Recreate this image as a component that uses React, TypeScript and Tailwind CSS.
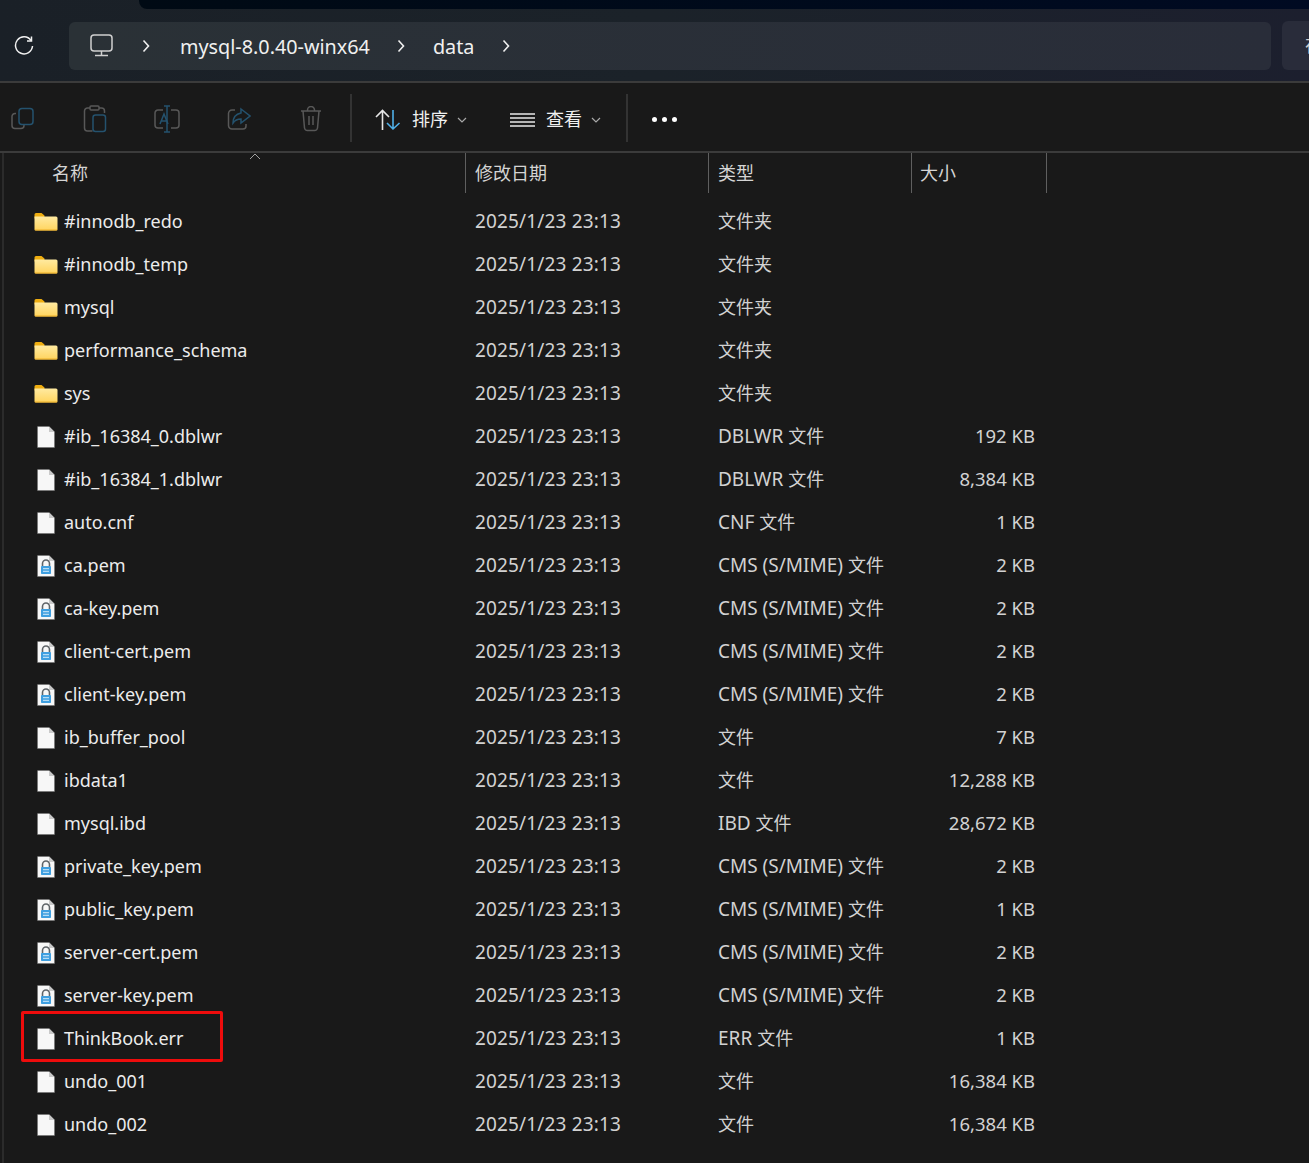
const FONT = 'font-["Noto_Sans","Noto_Sans_CJK_SC",sans-serif]';

type Kind = 'folder' | 'file' | 'pem';

const rows: { name: string; type: string; size: string; kind: Kind }[] = [
  { name: '#innodb_redo', type: '文件夹', size: '', kind: 'folder' },
  { name: '#innodb_temp', type: '文件夹', size: '', kind: 'folder' },
  { name: 'mysql', type: '文件夹', size: '', kind: 'folder' },
  { name: 'performance_schema', type: '文件夹', size: '', kind: 'folder' },
  { name: 'sys', type: '文件夹', size: '', kind: 'folder' },
  { name: '#ib_16384_0.dblwr', type: 'DBLWR 文件', size: '192 KB', kind: 'file' },
  { name: '#ib_16384_1.dblwr', type: 'DBLWR 文件', size: '8,384 KB', kind: 'file' },
  { name: 'auto.cnf', type: 'CNF 文件', size: '1 KB', kind: 'file' },
  { name: 'ca.pem', type: 'CMS (S/MIME) 文件', size: '2 KB', kind: 'pem' },
  { name: 'ca-key.pem', type: 'CMS (S/MIME) 文件', size: '2 KB', kind: 'pem' },
  { name: 'client-cert.pem', type: 'CMS (S/MIME) 文件', size: '2 KB', kind: 'pem' },
  { name: 'client-key.pem', type: 'CMS (S/MIME) 文件', size: '2 KB', kind: 'pem' },
  { name: 'ib_buffer_pool', type: '文件', size: '7 KB', kind: 'file' },
  { name: 'ibdata1', type: '文件', size: '12,288 KB', kind: 'file' },
  { name: 'mysql.ibd', type: 'IBD 文件', size: '28,672 KB', kind: 'file' },
  { name: 'private_key.pem', type: 'CMS (S/MIME) 文件', size: '2 KB', kind: 'pem' },
  { name: 'public_key.pem', type: 'CMS (S/MIME) 文件', size: '1 KB', kind: 'pem' },
  { name: 'server-cert.pem', type: 'CMS (S/MIME) 文件', size: '2 KB', kind: 'pem' },
  { name: 'server-key.pem', type: 'CMS (S/MIME) 文件', size: '2 KB', kind: 'pem' },
  { name: 'ThinkBook.err', type: 'ERR 文件', size: '1 KB', kind: 'file' },
  { name: 'undo_001', type: '文件', size: '16,384 KB', kind: 'file' },
  { name: 'undo_002', type: '文件', size: '16,384 KB', kind: 'file' },
];

function FolderIcon() {
  return (
    <svg width="24" height="20" viewBox="0 0 24 20">
      <defs>
        <linearGradient id="folderBody" x1="0" y1="0" x2="0" y2="1">
          <stop offset="0" stopColor="#ffeaa0" />
          <stop offset="1" stopColor="#ffd45e" />
        </linearGradient>
      </defs>
      <path d="M0.5 2.500a1.500 1.500 0 0 1 1.500-1.500h5.500l3 2.500v3h-10z" fill="#eead10" />
      <path d="M0.5 4.500h21.500a1.500 1.500 0 0 1 1.500 1.500v11a1.500 1.500 0 0 1-1.500 1.500h-20a1.500 1.500 0 0 1-1.500-1.500z" fill="url(#folderBody)" />
      <path d="M0.5 17.500h23v0.300a1 1 0 0 1-1 0.700h-21a1 1 0 0 1-1-0.700z" fill="#eeb028" />
    </svg>
  );
}

function FileIcon({ lock }: { lock?: boolean }) {
  return (
    <svg width="18" height="22" viewBox="0 0 18 22">
      <path d="M0.500 1a0.500 0.500 0 0 1 .5-.5h11l5.500 5.500v15a0.500 0.500 0 0 1-.5.5h-16a0.500 0.500 0 0 1-.5-.5z" fill="#f7f7f7" stroke="#777" strokeWidth="0.8" />
      <path d="M12 0.500v5.500h5.500z" fill="#c9c9c9" />
      {lock && (
        <g>
          <path d="M5.500 11.500v-3a3.500 3.500 0 0 1 7 0v3" fill="none" stroke="#5f6468" strokeWidth="1.600" />
          <rect x="4" y="11" width="10" height="8" rx="0.8" fill="#3f9fe0" />
          <rect x="6" y="13.200" width="6" height="1" fill="#d4ecfb" />
          <rect x="6" y="15.800" width="6" height="1" fill="#d4ecfb" />
        </g>
      )}
    </svg>
  );
}

function ToolbarIcons() {
  const gray = '#585858';
  const blue = '#24526e';
  return (
    <div className="flex items-center -mt-[2px]">
      <div className="w-[46px] mr-[13px] flex justify-center">
        <svg width="24" height="24" viewBox="0 0 24 24" fill="none" strokeWidth="1.5">
          <path d="M5 6.500h-1a3 3 0 0 0-3 3v9a3 3 0 0 0 3 3h6a3 3 0 0 0 3-3v-1" stroke={gray} />
          <rect x="8" y="1.500" width="14" height="16" rx="3" stroke={blue} />
        </svg>
      </div>
      <div className="w-[72px] flex justify-center">
        <svg width="24" height="28" viewBox="0 0 24 28" fill="none" strokeWidth="1.5">
          <path d="M7 3h-2.500a3 3 0 0 0-3 3v17a3 3 0 0 0 3 3h5M16 3h2.500a3 3 0 0 1 3 3v2" stroke={gray} />
          <rect x="7" y="1" width="9" height="4" rx="1" stroke={gray} />
          <rect x="10" y="10" width="12.500" height="16.500" rx="2.500" stroke={blue} />
        </svg>
      </div>
      <div className="w-[72px] flex justify-center">
        <svg width="26" height="28" viewBox="0 0 26 28" fill="none" strokeWidth="1.5">
          <path d="M9 5h-5a3 3 0 0 0-3 3v12a3 3 0 0 0 3 3h5M17 5h5a3 3 0 0 1 3 3v12a3 3 0 0 1-3 3h-5" stroke={gray} />
          <path d="M10 1h6M13 1v26M10 27h6" stroke={blue} />
          <path d="M6 19l4-10 4 10M7.500 16h5" stroke={blue} />
        </svg>
      </div>
      <div className="w-[72px] flex justify-center">
        <svg width="24" height="24" viewBox="0 0 24 24" fill="none" strokeWidth="1.5">
          <path d="M8 3h-3a3.500 3.500 0 0 0-3.500 3.500v12a3.500 3.500 0 0 0 3.500 3.500h11a3 3 0 0 0 3-3v-2" stroke={gray} />
          <path d="M14 2l9 7-9 7v-4c-4 0-6 1-8 4 0-6 3-9 8-10z" stroke={blue} />
        </svg>
      </div>
      <div className="w-[72px] flex justify-center">
        <svg width="22" height="26" viewBox="0 0 22 26" fill="none" strokeWidth="1.5" stroke={gray}>
          <path d="M1 5h20M7.500 5v-1a3 3 0 0 1 7 0v1M3 5l1.500 17a3 3 0 0 0 3 2.500h7a3 3 0 0 0 3-2.500l1.500-17M9 10v9M13 10v9" />
        </svg>
      </div>
    </div>
  );
}

function Chevron({ className }: { className: string }) {
  return (
    <svg className={className} width="8" height="14" viewBox="0 0 8 14" fill="none" stroke="#f0f0f0" strokeWidth="1.6">
      <path d="M1.500 1.500l5 5.500-5 5.500" />
    </svg>
  );
}

function SmallDown() {
  return (
    <svg width="10" height="6" viewBox="0 0 10 6" fill="none" stroke="#a8a8a8" strokeWidth="1.2">
      <path d="M1 1l4 4 4-4" />
    </svg>
  );
}

// latin part of the type runs a little larger than the trailing 文件 / 文件夹
function TypeText({ value }: { value: string }) {
  const cut = value.search(/[\u4e00-\u9fff]/);
  return (
    <>
      {value.slice(0, cut)}
      <span className="text-[18px]">{value.slice(cut)}</span>
    </>
  );
}

export default function App() {
  return (
    <div className={`${FONT} w-[1309px] h-[1163px] overflow-hidden bg-[#191919] text-[#e8e8e8]`}>
      {/* address bar */}
      <div className="h-[81px] bg-linear-to-r from-[#1a2027] via-[#1b2229] to-[#1c1f2e] flex flex-col">
        <div className="h-[9px] ml-[139px] rounded-bl-lg bg-linear-to-r from-[#000a14] to-[#000a22]" />
        <div className="flex items-center flex-1 pt-[1px]">
          <div className="w-[69px] shrink-0 flex justify-center pr-[21px]">
            <svg width="20" height="20" viewBox="0 0 20 20" fill="none" stroke="#f0f0f0" strokeWidth="1.5">
              <path d="M17 4.500a8.500 8.500 0 1 0 1.500 5.500" />
              <path d="M17.500 0.500v4.500h-4.500" />
            </svg>
          </div>
          <div className="w-[1202px] shrink-0 h-[48px] rounded-md bg-linear-to-r from-[#2a3136] to-[#292d39] flex items-center text-[19.8px] text-[#f0f0f0]">
            <svg className="ml-[21px]" width="23" height="23" viewBox="0 0 23 23" fill="none" stroke="#d0d0d0" strokeWidth="1.5">
              <rect x="1" y="1" width="21" height="16" rx="3" />
              <path d="M11.500 17v4M5 21.500h13" />
            </svg>
            <Chevron className="ml-[29px]" />
            <span className="ml-[30px] pt-[3px]">mysql-8.0.40-winx64</span>
            <Chevron className="ml-[27px]" />
            <span className="ml-[28px] pt-[3px]">data</span>
            <Chevron className="ml-[28px]" />
          </div>
          <div className="ml-[11px] w-[40px] shrink-0 h-[49px] rounded-l-md bg-[#292c3a] flex items-center overflow-hidden text-[18px] text-[#cfcfcf] pl-[23px]">
            在
          </div>
        </div>
      </div>

      {/* toolbar */}
      <div className="h-[72px] border-y-2 border-[#3b3b3b] flex items-center pt-[5px] text-[18px] text-[#f0f0f0]">
        <ToolbarIcons />
        <div className="ml-[3px] w-[2px] h-[48px] bg-[#333] -mt-[3px]" />
        <svg className="ml-[23px]" width="26" height="22" viewBox="0 0 26 22" fill="none" strokeWidth="1.6">
          <path d="M7.500 21v-19M1 8l6.500-6.500 6.500 6.500" stroke="#e6e6e6" />
          <path d="M18 1v19M12 14l6 6 6.500-6" stroke="#4fb0e8" />
        </svg>
        <span className="ml-[11px]">排序</span>
        <div className="ml-[9px]"><SmallDown /></div>
        <svg className="ml-[43px]" width="25" height="14" viewBox="0 0 25 14" stroke="#e8e8e8" strokeWidth="1.400">
          <path d="M0 1h25M0 5.000h25M0 9h25M0 13h25" />
        </svg>
        <span className="ml-[11px]">查看</span>
        <div className="ml-[9px]"><SmallDown /></div>
        <div className="ml-[25px] w-[2px] h-[48px] bg-[#333] -mt-[3px]" />
        <div className="ml-[24px] flex gap-[5px]">
          <div className="size-[5px] rounded-full bg-white" />
          <div className="size-[5px] rounded-full bg-white" />
          <div className="size-[5px] rounded-full bg-white" />
        </div>
      </div>

      {/* file list */}
      <div className="ml-[2px] border-l-2 border-[#2b2b2b] h-[1010px]">
        <div className="flex h-[40px] text-[18px] text-[#d4d4d4]">
          <div className="relative w-[461px] pl-[48px] flex items-center">
            名称
            <svg className="absolute left-[245px] top-0" width="12" height="7" viewBox="0 0 12 7" fill="none" stroke="#a0a0a0" strokeWidth="1">
              <path d="M1 6l5-5 5 5" />
            </svg>
          </div>
          <div className="w-[243px] border-l border-[#5f5f5f] pl-[9px] flex items-center">修改日期</div>
          <div className="w-[203px] border-l border-[#5f5f5f] pl-[9px] flex items-center">类型</div>
          <div className="w-[136px] border-l border-r border-[#5f5f5f] pl-[8px] flex items-center">大小</div>
        </div>
        <div className="pt-[7px] text-[19px]">
          {rows.map(r => (
            <div key={r.name} className="flex h-[43px] items-center">
              <div className="relative w-[462px] flex items-center text-[18px]">
                <div className="w-[60px] flex justify-end pr-[6px]">
                  {r.kind === 'folder' ? <FolderIcon /> : <div className="pr-[3px] flex"><FileIcon lock={r.kind === 'pem'} /></div>}
                </div>
                <span className="text-[#ececec]">{r.name}</span>
                {r.name === 'ThinkBook.err' && (
                  <div className="absolute left-[17px] top-[-14px] w-[202px] h-[51px] border-[3px] border-[#ee0c0c] rounded-[2px]" />
                )}
              </div>
              <div className="w-[243px] pl-[9px] tracking-[0.15px] text-[#d2d2d2]">2025/1/23 23:13</div>
              <div className="w-[203px] pl-[9px] text-[#d2d2d2]"><TypeText value={r.type} /></div>
              <div className="w-[135px] pr-[12px] pb-[2px] text-right text-[18.5px] text-[#d2d2d2]">{r.size}</div>
            </div>
          ))}
        </div>
      </div>
    </div>
  );
}
